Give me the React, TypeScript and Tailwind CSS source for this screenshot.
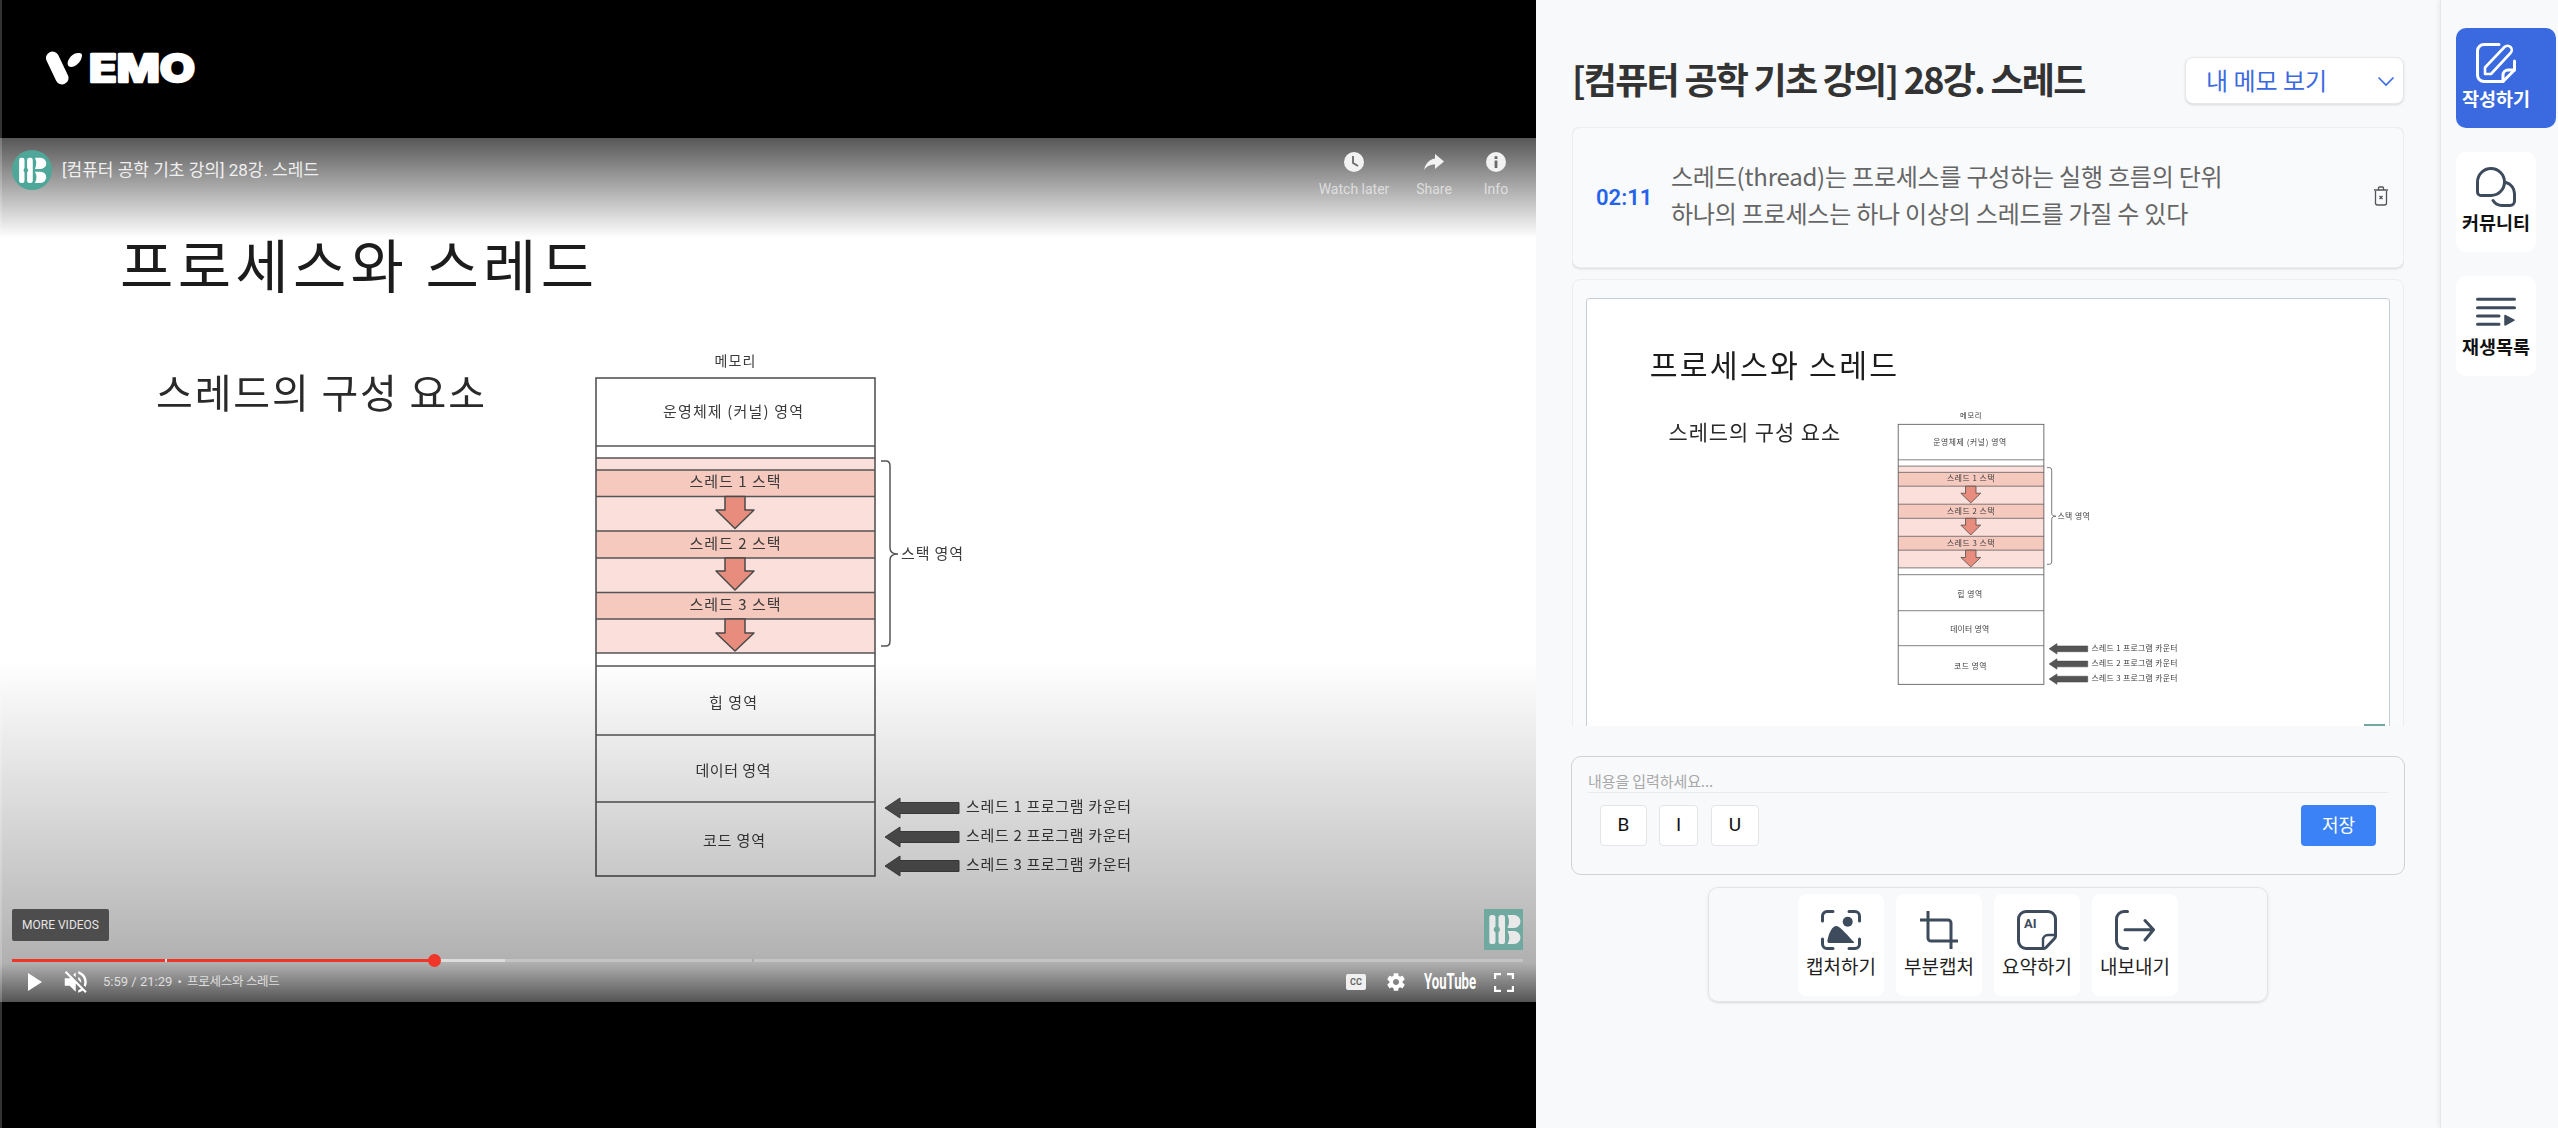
import React from "react";

const KR = '"Noto Sans CJK KR", sans-serif';

function Arrow({ y0, y1, y2 }: { y0: number; y1: number; y2: number }) {
  return (
    <path
      d={`M725 ${y0} H745 V${y1} H754 L735 ${y2} L716 ${y1} H725 Z`}
      fill="#e88d7d"
      stroke="#4a4a4a"
      strokeWidth="1.5"
      strokeLinejoin="round"
    />
  );
}

function PcArrow({ y }: { y: number }) {
  return (
    <path
      d={`M885 ${y} L900 ${y - 10} V${y - 5.5} H959 V${y + 5.5} H900 V${y + 10} Z`}
      fill="#555555"
      stroke="#444444"
      strokeWidth="1"
    />
  );
}

function T({ x, y, len, size, children, anchor = "middle", fill = "#3a3a3a" }: { x: number; y: number; len: number; size: number; children: string; anchor?: "middle" | "start"; fill?: string }) {
  return (
    <text
      x={x}
      y={y - 2.5}
      textLength={len}
      lengthAdjust="spacing"
      fontSize={size}
      textAnchor={anchor}
      dominantBaseline="central"
      fill={fill}
      fontFamily={KR}
    >
      {children}
    </text>
  );
}

function Slide({ className }: { className?: string }) {
  const lines = [308, 320, 332, 358.5, 393, 420, 454.5, 481, 515, 528, 597, 664];
  return (
    <svg viewBox="0 0 1536 864" className={className} xmlns="http://www.w3.org/2000/svg">
      <rect width="1536" height="864" fill="#ffffff" />
      <T x={120} y={127} len={474} size={58} anchor="start" fill="#1c1c1c">프로세스와 스레드</T>
      <T x={156} y={255} len={329} size={40} anchor="start" fill="#2a2a2a">스레드의 구성 요소</T>
      <T x={735} y={224} len={41} size={14}>메모리</T>
      <rect x="596" y="320" width="279" height="195" fill="#fadfda" />
      <rect x="596" y="332" width="279" height="26.5" fill="#f6c9bf" />
      <rect x="596" y="393" width="279" height="27" fill="#f6c9bf" />
      <rect x="596" y="454.5" width="279" height="26.5" fill="#f6c9bf" />
      <rect x="596" y="240" width="279" height="498" fill="none" stroke="#555555" strokeWidth="1.6" />
      {lines.map((y) => (
        <line key={y} x1="596" x2="875" y1={y} y2={y} stroke="#555555" strokeWidth="1.4" />
      ))}
      <Arrow y0={358.5} y1={372} y2={390.5} />
      <Arrow y0={420} y1={433} y2={452} />
      <Arrow y0={481} y1={495} y2={513} />
      <T x={733} y={275} len={140} size={15}>운영체제 (커널) 영역</T>
      <T x={735} y={345} len={91} size={15}>스레드 1 스택</T>
      <T x={735} y={407} len={91} size={15}>스레드 2 스택</T>
      <T x={735} y={468} len={91} size={15}>스레드 3 스택</T>
      <T x={733} y={566} len={48} size={15}>힙 영역</T>
      <T x={733} y={634} len={75} size={15}>데이터 영역</T>
      <T x={734} y={704} len={62} size={15}>코드 영역</T>
      <path
        d="M881 323 H886 Q890 323 890 328 V410 Q890 416 898 416 Q890 416 890 422 V503 Q890 508 886 508 H881"
        fill="none"
        stroke="#555555"
        strokeWidth="1.5"
      />
      <T x={901} y={417} len={62} size={15} anchor="start">스택 영역</T>
      <PcArrow y={670} />
      <PcArrow y={699} />
      <PcArrow y={728} />
      <T x={966} y={670} len={165} size={15} anchor="start">스레드 1 프로그램 카운터</T>
      <T x={966} y={699} len={165} size={15} anchor="start">스레드 2 프로그램 카운터</T>
      <T x={966} y={728} len={165} size={15} anchor="start">스레드 3 프로그램 카운터</T>
    </svg>
  );
}

function HbMark({ fg }: { fg: string }) {
  return (
    <g fill={fg}>
      <rect x="5.3" y="6" width="6.2" height="29" rx="2.6" />
      <rect x="14.5" y="6" width="6.5" height="29" rx="2.6" />
      <path d="M23.5 6 H30 a6.4 6.4 0 0 1 0 13 H23.5 Q26.5 12.5 23.5 6Z" />
      <path d="M23.5 22 H30 a6.5 6.5 0 0 1 0 13 H23.5 Q27 28.5 23.5 22Z" />
    </g>
  );
}

function VemoLogo() {
  return (
    <svg width="200" height="56" viewBox="0 0 200 56" className="ml-[44px]">
      <line x1="8.5" y1="17" x2="18" y2="37" stroke="#ffffff" strokeWidth="13" strokeLinecap="round" />
      <path d="M38 14 C38 20 32 26 27 26 C24 26 23 23 24 20 C26 15 30 12 34 12 C36.5 12 38 12.5 38 14Z" fill="#ffffff" />
      <text
        x="45"
        y="41"
        textLength="106"
        lengthAdjust="spacingAndGlyphs"
        fontSize="38"
        fontWeight="800"
        fontFamily="Inter, sans-serif"
        fill="#ffffff"
        stroke="#ffffff"
        strokeWidth="2.5"
        strokeLinejoin="round"
      >
        EMO
      </text>
    </svg>
  );
}

function TopAction({ label, w, children }: { label: string; w: string; children: React.ReactNode }) {
  return (
    <div className={`flex flex-col items-center ${w}`}>
      <svg width="24" height="24" viewBox="0 0 24 24">
        {children}
      </svg>
      <span className="text-[14px] leading-[18px] mt-[6px] text-white/60 font-['Roboto',sans-serif] whitespace-nowrap">{label}</span>
    </div>
  );
}

function VideoOverlay() {
  return (
    <>
      <div className="absolute left-0 right-0 top-0 h-[100px] bg-[linear-gradient(to_bottom,rgba(0,0,0,0.66),rgba(0,0,0,0))]" />
      <div className="absolute left-0 right-0 bottom-0 h-[341px] bg-[linear-gradient(to_bottom,rgba(0,0,0,0)_0px,rgba(0,0,0,0.22)_219px,rgba(0,0,0,0.31)_302px,rgba(0,0,0,0.67)_341px)]" />

      <div className="absolute left-[12px] top-[12px] flex items-center">
        <svg width="40" height="40" viewBox="0 0 40 40">
          <circle cx="20" cy="20" r="20" fill="#4fa79a" />
          <g transform="translate(2.5 2.5) scale(0.87)">
            <HbMark fg="#ffffff" />
            <circle cx="13" cy="20.5" r="2.6" fill="#4fa79a" />
          </g>
        </svg>
        <span className="ml-[10px] text-[17px] leading-[24px] text-[#f0f0f0] font-['Roboto','Noto_Sans_CJK_KR',sans-serif] whitespace-nowrap">
          [컴퓨터 공학 기초 강의] 28강. 스레드
        </span>
      </div>

      <div className="absolute top-[12px] left-[1314px] flex">
        <TopAction label="Watch later" w="w-[80px]">
          <circle cx="12" cy="12" r="10" fill="#f2f2f2" />
          <path d="M11 6 V13 L16 16" fill="none" stroke="#6a6a6a" strokeWidth="1.8" />
        </TopAction>
        <TopAction label="Share" w="w-[80px]">
          <path d="M22 11.5 L13 4 V8.5 C6.5 9.5 3.5 14 2 20 C5 16 8.5 14.5 13 14.5 V19 Z" fill="#f2f2f2" />
        </TopAction>
        <TopAction label="Info" w="w-[44px]">
          <circle cx="12" cy="12" r="10" fill="#f2f2f2" />
          <rect x="10.6" y="10.5" width="2.8" height="7.5" fill="#6a6a6a" />
          <rect x="10.6" y="6.2" width="2.8" height="2.8" fill="#6a6a6a" />
        </TopAction>
      </div>

      <div className="absolute left-[12px] top-[771px] w-[97px] h-[32px] rounded-[2px] bg-[#4d4d4d] flex items-center justify-center text-[12px] text-[#e6e6e6] font-['Roboto',sans-serif]">
        MORE VIDEOS
      </div>

      <svg width="39" height="41" viewBox="0 0 39 41" className="absolute left-[1484px] top-[771px]">
        <rect width="39" height="41" fill="#6fa9a0" />
        <HbMark fg="#e9e9e9" />
        <circle cx="12.8" cy="20.5" r="3" fill="#6fa9a0" />
      </svg>

      <div className="absolute left-[12px] top-[821px] w-[1511px] h-[3px] flex bg-white/25">
        <div className="w-[153px] bg-[#f03529]" />
        <div className="w-[2px] bg-[#dddddd]" />
        <div className="w-[268px] bg-[#f03529] relative">
          <div className="absolute right-[-6px] top-[-5px] w-[13px] h-[13px] rounded-full bg-[#f03529]" />
        </div>
        <div className="w-[70px] bg-[#dcdcdc]" />
        <div className="w-[247px]" />
        <div className="w-[2px] bg-[#aaaaaa]" />
      </div>

      <div className="absolute left-0 right-0 top-[832px] h-[24px] flex items-center">
        <svg width="16" height="20" viewBox="0 0 16 20" className="ml-[27px]">
          <path d="M1 1 L15 10 L1 19 Z" fill="#ffffff" />
        </svg>
        <svg width="44" height="44" viewBox="0 0 36 36" className="ml-[12px] shrink-0">
          <path
            fill="#ffffff"
            d="m 21.48,17.98 c 0,-1.77 -1.02,-3.29 -2.5,-4.03 v 2.21 l 2.45,2.45 c .03,-0.2 .05,-0.41 .05,-0.63 z m 2.5,0 c 0,.94 -0.2,1.82 -0.54,2.64 l 1.51,1.51 c .66,-1.24 1.03,-2.65 1.03,-4.15 0,-4.28 -2.99,-7.86 -7,-8.76 v 2.05 c 2.89,.86 5,3.54 5,6.71 z M 9.25,8.98 l -1.27,1.26 4.72,4.73 H 7.98 v 6 H 11.98 l 5,5 v -6.73 l 4.25,4.25 c -0.67,.52 -1.42,.93 -2.25,1.18 v 2.06 c 1.38,-0.31 2.63,-0.95 3.69,-1.81 l 2.04,2.05 1.27,-1.27 -9,-9 -7.72,-7.72 z m 7.72,.99 -2.09,2.08 2.09,2.09 V 9.98 z"
          />
        </svg>
        <span className="ml-[4px] text-[13px] text-[#dedede] font-['Roboto','Noto_Sans_CJK_KR',sans-serif] whitespace-nowrap">
          5:59 / 21:29 <span className="mx-[2px]">•</span> <span className="text-[12.5px] tracking-[-0.3px]">프로세스와 스레드</span>
        </span>
        <div className="flex-1" />
        <div className="w-[20px] h-[16px] rounded-[2px] bg-[#f0f0f0] flex items-center justify-center text-[9px] font-bold leading-none text-[#666666] font-['Roboto',sans-serif]">
          CC
        </div>
        <svg width="40" height="40" viewBox="0 0 36 36" className="ml-[10px] shrink-0">
          <path
            fill="#ffffff"
            d="m 23.94,18.78 c .03,-0.25 .05,-0.51 .05,-0.78 0,-0.27 -0.02,-0.52 -0.05,-0.78 l 1.68,-1.32 c .15,-0.12 .19,-0.33 .09,-0.51 l -1.6,-2.76 c -0.09,-0.17 -0.31,-0.24 -0.48,-0.17 l -1.99,.8 c -0.41,-0.32 -0.86,-0.58 -1.35,-0.78 l -0.30,-2.12 c -0.02,-0.19 -0.19,-0.33 -0.39,-0.33 l -3.2,0 c -0.2,0 -0.36,.14 -0.39,.33 l -0.30,2.12 c -0.48,.2 -0.93,.47 -1.35,.78 l -1.99,-0.8 c -0.18,-0.07 -0.39,0 -0.48,.17 l -1.6,2.76 c -0.1,.17 -0.05,.39 .09,.51 l 1.68,1.32 c -0.03,.25 -0.05,.52 -0.05,.78 0,.26 .02,.52 .05,.78 l -1.68,1.32 c -0.15,.12 -0.19,.33 -0.09,.51 l 1.6,2.76 c .09,.17 .31,.24 .48,.17 l 1.99,-0.8 c .41,.32 .86,.58 1.35,.78 l .30,2.12 c .02,.19 .19,.33 .39,.33 l 3.2,0 c .2,0 .36,-0.14 .39,-0.33 l .30,-2.12 c .48,-0.2 .93,-0.47 1.35,-0.78 l 1.99,.8 c .18,.07 .39,0 .48,-0.17 l 1.6,-2.76 c .09,-0.17 .05,-0.39 -0.09,-0.51 l -1.68,-1.32 z M 18,20.7 C 16.5,20.7 15.3,19.5 15.3,18 15.3,16.5 16.5,15.3 18,15.3 19.5,15.3 20.7,16.5 20.7,18 20.7,19.5 19.5,20.7 18,20.7 z"
          />
        </svg>
        <svg width="84" height="36" viewBox="0 0 84 36" className="ml-[8px] shrink-0">
          <text x="0" y="25" textLength="52" lengthAdjust="spacingAndGlyphs" fontSize="22" fontWeight="700" fontFamily="Roboto, sans-serif" fill="#ffffff">
            YouTube
          </text>
        </svg>
        <svg width="20" height="19" viewBox="0 0 20 19" className="-ml-[14px] mr-[22px] shrink-0">
          <path d="M1 6 V1 H7 M13 1 H19 V6 M19 13 V18 H13 M7 18 H1 V13" fill="none" stroke="#ffffff" strokeWidth="2.4" />
        </svg>
      </div>
    </>
  );
}

const IC = "#3d4b5c";

function Icon({ children, color = IC }: { children: React.ReactNode; color?: string }) {
  return (
    <svg width="40" height="40" viewBox="0 0 40 40" fill="none" stroke={color} strokeWidth="3" strokeLinecap="round" strokeLinejoin="round" className="shrink-0">
      {children}
    </svg>
  );
}

function Tile({ label, children }: { label: string; children: React.ReactNode }) {
  return (
    <div className="w-[86px] h-[102px] rounded-lg bg-white flex flex-col items-center pt-[16px]">
      {children}
      <span className="mt-[4px] text-[19px] leading-[24px] text-[#1f1f1f] whitespace-nowrap">{label}</span>
    </div>
  );
}

function FormatButton({ label, w }: { label: string; w: string }) {
  return (
    <div className={`${w} h-[41px] rounded-[4px] bg-white border border-[#e3e5e8] flex items-center justify-center text-[19px] text-[#111111] font-['Roboto',sans-serif]`}>
      {label}
    </div>
  );
}

function Panel() {
  return (
    <div className="w-[904px] h-full bg-[#f8f9fb] px-9 pt-[57px] flex flex-col">
      <div className="flex items-center justify-between h-[47px]">
        <h1 className="text-[36px] leading-[44px] font-bold text-[#333333] tracking-[-1.75px] whitespace-nowrap pb-[5px]">[컴퓨터 공학 기초 강의] 28강. 스레드</h1>
        <div className="w-[219px] h-[47px] rounded-lg bg-white border border-[#e6e8ec] shadow-sm flex items-center pl-[20px] pr-[7px] justify-between text-[24px] text-[#3b6ae0]">
          <span className="pb-[2px]">내 메모 보기</span>
          <svg width="20" height="20" viewBox="0 0 20 20" fill="none" stroke="#3b6ae0" strokeWidth="1.6">
            <path d="M2.5 6.5 L10 14 L17.5 6.5" />
          </svg>
        </div>
      </div>

      <div className="mt-[23px] h-[599px] overflow-hidden flex flex-col gap-[11px]">
        <div className="h-[141px] shrink-0 rounded-lg bg-[#f9fafb] border border-[#eceef1] shadow-sm flex items-center pl-[23px] pr-[14px] relative">
          <span className="w-[75px] shrink-0 text-[22px] font-semibold text-[#2563eb] font-['Roboto',sans-serif]">02:11</span>
          <div className="flex-1 text-[24px] leading-[37px] text-[#666666] tracking-[-0.22px] pb-[7px]">
            <div>스레드(thread)는 프로세스를 구성하는 실행 흐름의 단위</div>
            <div>하나의 프로세스는 하나 이상의 스레드를 가질 수 있다</div>
          </div>
          <svg width="16" height="20" viewBox="0 0 16 20" fill="none" stroke="#555555" strokeWidth="1.3" className="mb-[4px]">
            <path d="M2.5 5 V17 a2 2 0 0 0 2 2 H11.5 a2 2 0 0 0 2-2 V5" />
            <path d="M1 4 H15 M5.5 4 V2 a1 1 0 0 1 1-1 H9.5 a1 1 0 0 1 1 1 V4" />
            <path d="M6.5 10 L9.5 13 M9.5 10 L6.5 13" />
          </svg>
        </div>
        <div className="shrink-0 rounded-t-lg bg-[#f9fafb] border border-[#eceef1] px-[13px] pt-[18px]">
          <div className="relative rounded-t-[4px] overflow-hidden border-x border-t border-[#c9ccd1] bg-white">
            <Slide className="block w-full blur-[0.3px]" />
            <div className="absolute left-[777px] top-[425px] w-[21px] h-[22px] bg-[#6fa9a0]" />
          </div>
        </div>
      </div>

      <div className="mt-[30px] h-[119px] -mx-px rounded-[10px] border border-[#cfd2d6] px-4 pt-[13px]">
        <div className="h-[23px] border-b border-[#e8eaed] text-[15px] leading-[22px] text-[#a8a8a8] tracking-[-0.1px]">내용을 입력하세요...</div>
        <div className="mt-[12px] px-3 flex items-center">
          <FormatButton label="B" w="w-[47px]" />
          <div className="w-[12px]" />
          <FormatButton label="I" w="w-[39px]" />
          <div className="w-[13px]" />
          <FormatButton label="U" w="w-[48px]" />
          <div className="flex-1" />
          <div className="w-[75px] h-[41px] rounded-[4px] bg-[#3b82f6] text-white text-[18px] flex items-center justify-center pb-[2px]">저장</div>
        </div>
      </div>

      <div className="mt-[12px] mx-auto w-[560px] h-[115px] rounded-[10px] border border-[#e2e4e8] shadow-sm flex items-center justify-center gap-3">
        <Tile label="캡처하기">
          <Icon>
            <path d="M1.5 11 V6 a4.5 4.5 0 0 1 4.5-4.5 H12 M28 1.5 H34 a4.5 4.5 0 0 1 4.5 4.5 V11 M1.5 29 V34 a4.5 4.5 0 0 0 4.5 4.5 H12 M28 38.5 H34 a4.5 4.5 0 0 0 4.5-4.5 V29" />
            <circle cx="26.7" cy="11.7" r="5" fill={IC} stroke="none" />
            <path d="M6.5 30 C8 23 11 16 15.5 16 C19 16 28 27 33 32 Q33.8 33 32 33 H8 Q6 33 6.5 30Z" fill={IC} stroke="none" />
          </Icon>
        </Tile>
        <Tile label="부분캡처">
          <Icon>
            <path d="M1 10 H29 a3 3 0 0 1 3 3 V39 M9 1 V28 a3 3 0 0 0 3 3 H39" strokeLinecap="butt" />
          </Icon>
        </Tile>
        <Tile label="요약하기">
          <svg width="40" height="40" viewBox="0 0 40 40" fill="none" stroke={IC} strokeWidth="3" strokeLinejoin="round" className="shrink-0">
            <path d="M27 38.5 H9 a7.5 7.5 0 0 1-7.5-7.5 V9 a7.5 7.5 0 0 1 7.5-7.5 H31 a7.5 7.5 0 0 1 7.5 7.5 V26 Q38.5 27.5 37.5 28.5 L29 37.5 Q28 38.5 27 38.5 Z" />
            <path d="M26 38 V30 a5 5 0 0 1 5-5 H38" strokeWidth="2.4" />
            <text x="7" y="18" fontSize="13" fontWeight="700" fontFamily="Roboto, sans-serif" fill={IC} stroke="none">
              AI
            </text>
          </svg>
        </Tile>
        <Tile label="내보내기">
          <Icon>
            <path d="M12.5 1.5 H9 a7.5 7.5 0 0 0-7.5 7.5 V31 a7.5 7.5 0 0 0 7.5 7.5 H12.5" />
            <path d="M10 19.7 H38 M30 10.5 L38.5 19.7 L30 30" />
          </Icon>
        </Tile>
      </div>
    </div>
  );
}

function SideButton({ label, active, children }: { label: string; active?: boolean; children: React.ReactNode }) {
  return (
    <div
      className={
        active
          ? "w-[100px] h-[100px] rounded-[10px] bg-[#3b6ae0] text-white flex flex-col items-start pl-[20px] pt-[15px]"
          : "w-[80px] h-[100px] rounded-[10px] bg-white text-[#111111] flex flex-col items-start pl-[20px] pt-[15px]"
      }
    >
      {children}
      <span className="-ml-[16px] w-[72px] text-center mt-[3px] text-[18.5px] leading-[24px] font-semibold whitespace-nowrap">{label}</span>
    </div>
  );
}

function Sidebar() {
  return (
    <div className="w-[118px] h-full bg-[#f8f9fb] border-l border-[#e6e8eb] shadow-[-2px_0_4px_rgba(0,0,0,0.05)] pl-[15px] pt-[28px] flex flex-col gap-6">
      <SideButton label="작성하기" active>
        <Icon color="#ffffff">
          <path d="M23 1.5 H8 a6.5 6.5 0 0 0-6.5 6.5 V32 a6.5 6.5 0 0 0 6.5 6.5 H27 L38.5 27 V18" />
          <path d="M27 38.5 V32 a5 5 0 0 1 5-5 H38.5" />
          <path d="M9 31 V24.5 L28.5 4 a4.2 4.2 0 0 1 6 6 L15 31 Z" strokeWidth="2.6" />
        </Icon>
      </SideButton>
      <SideButton label="커뮤니티">
        <Icon>
          <path d="M15 1.5 a13.5 13.5 0 0 1 0 27 H5 a3.5 3.5 0 0 1-3.5-3.5 V15 A13.5 13.5 0 0 1 15 1.5 Z" />
          <path d="M30 15.5 a11.5 11.5 0 0 1 8.5 11 V34 a4.5 4.5 0 0 1-4.5 4.5 H26 A11 11 0 0 1 17 33.5" />
        </Icon>
      </SideButton>
      <SideButton label="재생목록">
        <Icon>
          <path d="M1.5 8.3 H38.5 M1.5 16.7 H38.5 M1.5 25 H23 M1.5 33.3 H23" />
          <path d="M29 24.5 L38 29.2 L29 34 Z" fill={IC} strokeWidth="1.5" />
        </Icon>
      </SideButton>
    </div>
  );
}

export default function App() {
  return (
    <div className="w-[2558px] h-[1128px] overflow-hidden flex font-['Noto_Sans_CJK_KR',sans-serif]">
      <div className="w-[1536px] h-full bg-black relative shrink-0">
        <div className="h-[138px] flex items-center">
          <VemoLogo />
        </div>
        <div className="relative w-[1536px] h-[864px] overflow-hidden bg-white">
          <Slide className="block w-full h-full blur-[0.5px]" />
          <VideoOverlay />
        </div>
        <div className="absolute left-0 top-0 bottom-0 w-[2px] bg-white/20" />
      </div>
      <Panel />
      <Sidebar />
    </div>
  );
}
